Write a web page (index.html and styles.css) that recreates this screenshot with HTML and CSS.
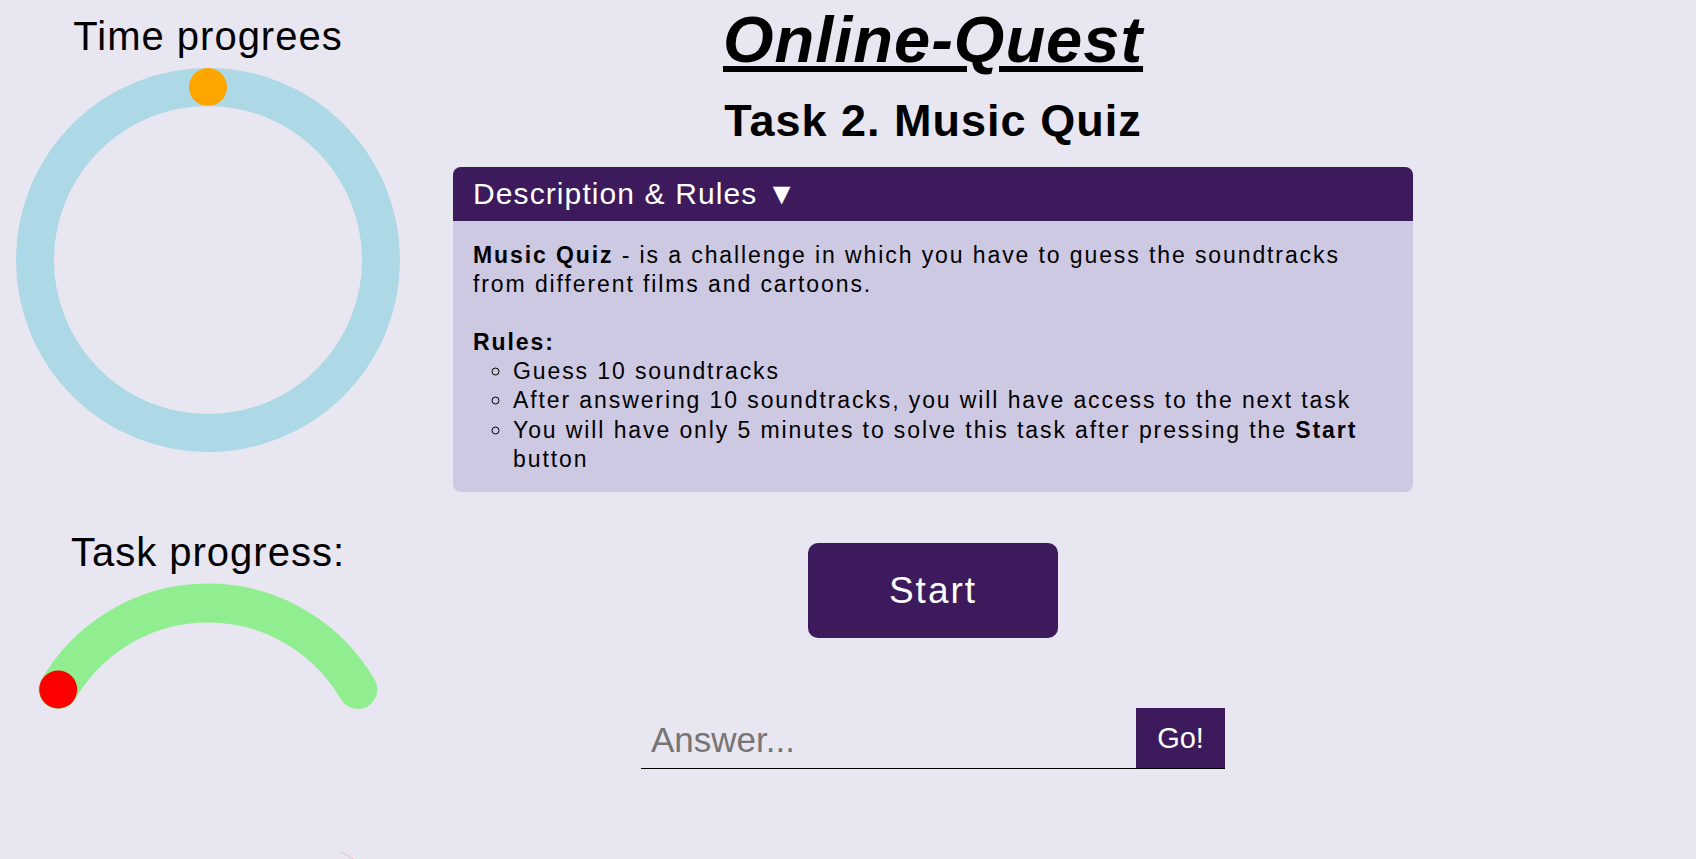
FILE: index.html
```html
<!DOCTYPE html>
<html lang="en">
<head>
<meta charset="utf-8">
<title>Online-Quest</title>
<link rel="stylesheet" href="styles.css">
</head>
<body>
<div class="page">
  <aside class="side">
    <h2 class="side-title">Time progrees</h2>
    <svg class="timer" width="416" height="410" viewBox="0 0 416 410">
      <circle cx="208" cy="201" r="173" fill="none" stroke="#add8e6" stroke-width="38"/>
      <circle cx="208" cy="28" r="19" fill="#ffa500"/>
    </svg>
    <h2 class="side-title side-title-2">Task progress:</h2>
    <svg class="gauge" width="416" height="284" viewBox="0 0 416 284">
      <path d="M 58.2 114.5 A 173 173 0 0 1 357.8 114.5" fill="none" stroke="#90ee90" stroke-width="39" stroke-linecap="round"/>
      <circle cx="58.2" cy="114.5" r="19" fill="#ff0000"/>
      <line x1="341" y1="277" x2="353" y2="284" stroke="#f2a6b4" stroke-width="1" stroke-dasharray="2 1"/>
    </svg>
  </aside>
  <main class="main">
    <h1 class="title">Online-Quest</h1>
    <h2 class="subtitle">Task 2. Music Quiz</h2>
    <section class="rules">
      <div class="rules-head">Description &amp; Rules ▼</div>
      <div class="rules-body">
        <p class="rules-intro"><b>Music Quiz</b> - is a challenge in which you have to guess the soundtracks from different films and cartoons.</p>
        <p class="rules-label"><b>Rules:</b></p>
        <ul class="rules-list">
          <li>Guess 10 soundtracks</li>
          <li>After answering 10 soundtracks, you will have access to the next task</li>
          <li>You will have only 5 minutes to solve this task after pressing the <b>Start</b> button</li>
        </ul>
      </div>
    </section>
    <button class="start" type="button">Start</button>
    <form class="answer">
      <input class="answer-input" type="text" placeholder="Answer...">
      <button class="go" type="button">Go!</button>
    </form>
  </main>
</div>
</body>
</html>
```
FILE: styles.css
```css
* { box-sizing: border-box; }

html, body {
  margin: 0;
  height: 100%;
  overflow: hidden;
}

body {
  background: #e8e6f0;
  font-family: "Liberation Sans", Arial, sans-serif;
  color: #000;
}

.page {
  display: flex;
  align-items: flex-start;
}

.side {
  width: 416px;
  flex: none;
  display: flex;
  flex-direction: column;
  align-items: center;
}

.side-title {
  margin: 13px 0 0;
  font-size: 40px;
  font-weight: normal;
  letter-spacing: 1px;
  line-height: 46px;
  text-align: center;
}

.side-title-2 {
  margin-top: 60px;
}

.timer, .gauge {
  display: block;
}

.main {
  width: 1034px;
  flex: none;
  display: flex;
  flex-direction: column;
  align-items: center;
  padding-top: 2px;
}

.title {
  margin: 0;
  font-size: 65px;
  font-style: italic;
  font-weight: bold;
  letter-spacing: 1px;
  text-decoration: underline;
  line-height: 75px;
}

.subtitle {
  margin: 18px 0 21px;
  font-size: 45px;
  font-weight: bold;
  letter-spacing: 1px;
  line-height: 51px;
}

.rules {
  width: 960px;
  border-radius: 8px;
  overflow: hidden;
  background: #cec9e2;
}

.rules-head {
  background: #3c1a5b;
  color: #fff;
  font-size: 30px;
  letter-spacing: 1.1px;
  line-height: 34px;
  padding: 10px 20px 10px;
}

.rules-body {
  padding: 20px 20px 18px;
  font-size: 23px;
  letter-spacing: 1.9px;
  line-height: 29.1px;
}

.rules-intro {
  margin: 0 0 29.1px;
}

.rules-label {
  margin: 0;
}

.rules-list {
  margin: 0;
  padding-left: 40px;
  list-style: circle;
}

.start {
  margin-top: 51px;
  width: 250px;
  height: 95px;
  border: none;
  border-radius: 10px;
  background: #3c1a5b;
  color: #fff;
  font-family: inherit;
  font-size: 37px;
  letter-spacing: 2px;
  padding-top: 3px;
  cursor: pointer;
}

.answer {
  margin-top: 70px;
  width: 584px;
  display: flex;
  border-bottom: 1px solid #000;
}

.answer-input {
  width: 495px;
  height: 60px;
  border: none;
  background: transparent;
  padding: 4px 10px 0;
  font-family: inherit;
  font-size: 35px;
  outline: none;
}

.answer-input::placeholder {
  color: #757575;
}

.go {
  width: 89px;
  height: 60px;
  border: none;
  border-radius: 0;
  background: #3c1a5b;
  color: #fff;
  font-family: inherit;
  font-size: 29px;
  padding: 2px 0 0;
}
```
